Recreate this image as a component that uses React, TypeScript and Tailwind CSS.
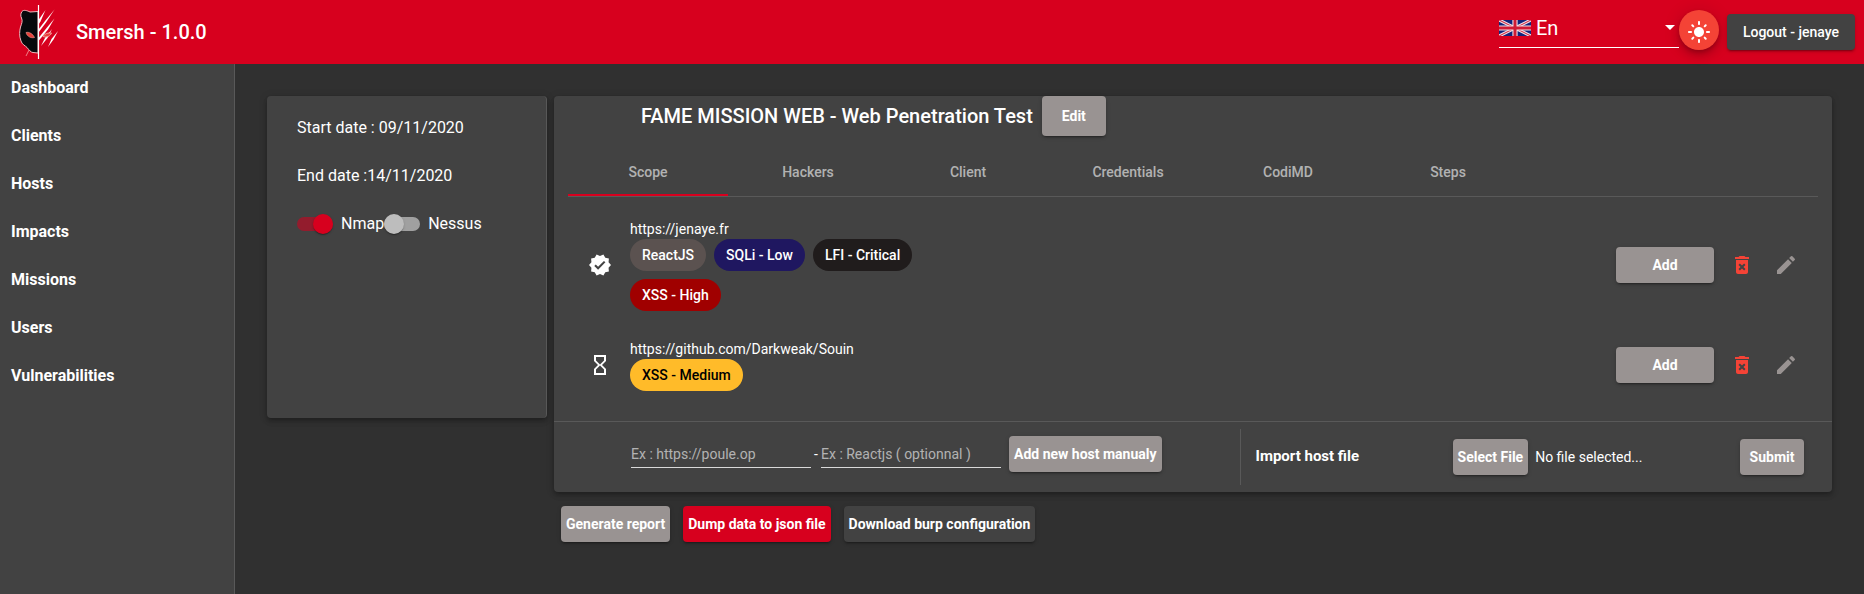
import { useRef, useState, type ReactNode } from 'react';
import { MdDeleteForever, MdEdit, MdHourglassEmpty, MdLightMode, MdVerified } from 'react-icons/md';

const NAV = ['Dashboard', 'Clients', 'Hosts', 'Impacts', 'Missions', 'Users', 'Vulnerabilities'];
const TABS = ['Scope', 'Hackers', 'Client', 'Credentials', 'CodiMD', 'Steps'];

type Chip = { label: string; tone: string };
type Host = { url: string; verified: boolean; chips: Chip[] };

const HOSTS: Host[] = [
  {
    url: 'https://jenaye.fr',
    verified: true,
    chips: [
      { label: 'ReactJS', tone: 'bg-[#5b5250] text-white' },
      { label: 'SQLi - Low', tone: 'bg-[#1f1760] text-white' },
      { label: 'LFI - Critical', tone: 'bg-[#201c1c] text-white' },
      { label: 'XSS - High', tone: 'bg-[#a00000] text-white' },
    ],
  },
  {
    url: 'https://github.com/Darkweak/Souin',
    verified: false,
    chips: [{ label: 'XSS - Medium', tone: 'bg-[#ffbb29] text-black' }],
  },
];

const RAISED =
  'shadow-[0_3px_1px_-2px_rgba(0,0,0,0.2),0_2px_2px_0_rgba(0,0,0,0.14),0_1px_5px_0_rgba(0,0,0,0.12)]';
const CARD =
  'rounded bg-[#424242] shadow-[0_2px_4px_-1px_rgba(0,0,0,0.2),0_4px_5px_0_rgba(0,0,0,0.14),0_1px_10px_0_rgba(0,0,0,0.12)]';

function Button({ className, children, onClick }: { className: string; children: ReactNode; onClick?: () => void }) {
  return (
    <button type="button" onClick={onClick} className={`shrink-0 rounded text-sm whitespace-nowrap text-white ${RAISED} ${className}`}>
      {children}
    </button>
  );
}

function Logo() {
  return (
    <svg viewBox="0 0 40 54" className="h-[54px] w-10" aria-hidden="true">
      <path
        d="M20 6.500 L12 7 C9 5.500 5.500 4.500 4 6.500 C2.500 8.500 2.500 11 3.500 13 C5 16 3.500 19 2.500 22 C1.500 26 1 31 3 36 C4 39.500 7 40.500 9 42.500 C11 45 13 47.500 15 47.500 L20 48 Z"
        fill="#06090c"
        stroke="#f0b9be"
        strokeWidth="1"
      />
      <path d="M20.500 0 V54" stroke="#fff" strokeWidth="1.200" />
      <path d="M8 27.500 C11 26.500 15 29 16.500 32.500 C13 33.500 9 31.500 8 27.500 Z" fill="#e8403a" stroke="#f0a09a" strokeWidth="0.600" />
      <g fill="#fff">
        <path d="M27.500 5 L22.500 16.500 L20.500 19.500 V15 Z" />
        <path d="M36.500 4.500 L28 17.500 L20.500 27.500 V24.500 L27 16 Z" />
        <path d="M36.500 13.500 L30 24.500 L20.500 36 V33 L29 22.500 Z" />
        <path d="M34 24 L29.500 33 L23 41 L27 33 Z" />
        <path d="M40 26 L35.500 34.500 L30 42 L33.500 34 Z" />
      </g>
      <path d="M25 31.500 C26.500 28.500 30.500 27.500 33.500 28 C32.500 31 28.500 33 25 31.500 Z" fill="#e8403a" stroke="#f6b5ae" strokeWidth="0.800" />
      <path d="M11 45 L8 51" stroke="#ee7d86" strokeWidth="1" fill="none" />
    </svg>
  );
}

function UnionFlag() {
  return (
    <svg viewBox="0 0 32 16" className="h-4 w-8 shrink-0" aria-hidden="true">
      <rect width="32" height="16" fill="#12247c" />
      <path d="M0 0 L32 16 M32 0 L0 16" stroke="#f1dfe4" strokeWidth="3.200" />
      <path d="M0 0 L32 16 M32 0 L0 16" stroke="#cf2740" strokeWidth="1.100" />
      <path d="M16 0 V16 M0 8 H32" stroke="#f1dfe4" strokeWidth="5.200" />
      <path d="M16 0 V16 M0 8 H32" stroke="#cf1b35" strokeWidth="3" />
    </svg>
  );
}

function Header() {
  return (
    <header className="flex h-16 items-center bg-[#d7001e] pr-[9px] pl-[18px]">
      <Logo />
      <h1 className="ml-[18px] text-xl font-medium">Smersh - 1.0.0</h1>
      <div className="relative mb-2 ml-auto flex h-10 w-[180px] items-center border-b border-white">
        <UnionFlag />
        <select aria-label="Language" className="h-full w-full appearance-none bg-transparent pl-[5px] text-xl outline-none">
          <option>En</option>
        </select>
        <svg viewBox="0 0 10 5" className="pointer-events-none absolute top-[17px] right-1 h-[5px] w-[10px]" aria-hidden="true">
          <path d="M0 0 H10 L5 5 Z" fill="#fff" />
        </svg>
      </div>
      <button
        type="button"
        aria-label="Toggle theme"
        className="mb-1 flex size-10 items-center justify-center rounded-full bg-[#f44336] pt-1 shadow-[0_3px_5px_-1px_rgba(0,0,0,0.2),0_6px_10px_0_rgba(0,0,0,0.14),0_1px_18px_0_rgba(0,0,0,0.12)]"
      >
        <MdLightMode className="size-6" />
      </button>
      <Button className="ml-2 h-9 bg-[#424242] px-4 font-medium">Logout - jenaye</Button>
    </header>
  );
}

function Toggle({ label, defaultChecked }: { label: string; defaultChecked?: boolean }) {
  return (
    <label className="flex items-center gap-2">
      <input
        type="checkbox"
        defaultChecked={defaultChecked}
        className="relative h-3.5 w-9 appearance-none rounded-full bg-[#a0a0a0] before:absolute before:-top-[3px] before:left-0 before:size-5 before:rounded-full before:bg-[#bdbdbd] before:shadow-[0_2px_1px_-1px_rgba(0,0,0,0.2),0_1px_1px_0_rgba(0,0,0,0.14),0_1px_3px_0_rgba(0,0,0,0.12)] checked:bg-[#931c2d] checked:before:left-4 checked:before:bg-[#d7001e]"
      />
      {label}
    </label>
  );
}

function HostRow({ host }: { host: Host }) {
  return (
    <li className="flex items-center pr-[34px] pl-[34px]">
      {host.verified ? <MdVerified className="size-6" /> : <MdHourglassEmpty className="size-6" />}
      <div className="ml-[18px]">
        <p className="text-sm">{host.url}</p>
        <ul className="flex w-80 flex-wrap gap-2">
          {host.chips.map((chip) => (
            <li key={chip.label} className={`flex h-8 items-center rounded-full px-3 text-sm font-medium ${chip.tone}`}>
              {chip.label}
            </li>
          ))}
        </ul>
      </div>
      <Button className="ml-auto h-9 w-[98px] bg-[#999392] font-bold">Add</Button>
      <button type="button" aria-label={`Delete ${host.url}`} className="ml-4 text-[#f44336]">
        <MdDeleteForever className="size-6" />
      </button>
      <button type="button" aria-label={`Edit ${host.url}`} className="ml-5 text-[#999392]">
        <MdEdit className="size-6" />
      </button>
    </li>
  );
}

function HostForms() {
  const fileInput = useRef<HTMLInputElement>(null);
  const [fileName, setFileName] = useState('No file selected...');
  const field = 'h-7 w-[180px] border-b border-white/80 bg-transparent text-sm outline-none placeholder:text-white/60';
  return (
    <div className="flex h-[71px] items-center border-t border-white/12 pr-7 pl-[77px] text-sm">
      <form className="mb-1.5 flex items-center">
        <input aria-label="Host URL" placeholder="Ex : https://poule.op" className={field} />
        <span className="w-2.5 text-center">-</span>
        <input aria-label="Technology" placeholder="Ex : Reactjs ( optionnal )" className={field} />
        <Button className="ml-2 h-9 bg-[#999392] px-[5px] font-bold">Add new host manualy</Button>
      </form>
      <form className="ml-[78px] flex h-14 flex-1 items-center border-l border-white/12 pl-[15px]">
        <label htmlFor="host-file" className="w-[197px] text-[15px] font-bold">
          Import host file
        </label>
        <input
          ref={fileInput}
          id="host-file"
          type="file"
          className="hidden"
          onChange={(e) => setFileName(e.target.files?.[0]?.name ?? 'No file selected...')}
        />
        <Button className="h-9 bg-[#999392] px-[5px] font-bold" onClick={() => fileInput.current?.click()}>
          Select File
        </Button>
        <span className="ml-[7px]">{fileName}</span>
        <Button className="ml-auto h-9 w-16 bg-[#999392] font-bold">Submit</Button>
      </form>
    </div>
  );
}

export default function App() {
  return (
    <div className="flex min-h-screen flex-col bg-[#303030] font-[Roboto,sans-serif] text-white">
      <Header />
      <div className="flex flex-1">
        <nav className="w-[235px] shrink-0 border-r border-white/12 bg-[#424242]">
          {NAV.map((item) => (
            <a key={item} href="#" className="flex h-12 items-center px-[11px] text-base font-bold">
              {item}
            </a>
          ))}
        </nav>
        <main className="flex flex-1 items-start gap-[7px] px-8 pt-8">
          <section className={`h-[322px] w-[280px] shrink-0 border-r border-white/12 px-[30px] pt-2 ${CARD}`}>
            <p className="flex h-12 items-center">Start date : 09/11/2020</p>
            <p className="flex h-12 items-center">End date :14/11/2020</p>
            <div className="flex h-12 items-center">
              <Toggle label="Nmap" defaultChecked />
              <Toggle label="Nessus" />
            </div>
          </section>
          <div className="flex-1">
            <section className={CARD}>
              <div className="flex items-center gap-[9px] pl-[87px]">
                <h2 className="text-xl font-medium">FAME MISSION WEB - Web Penetration Test</h2>
                <Button className="h-10 w-16 bg-[#999392] font-bold">Edit</Button>
              </div>
              <div role="tablist" className="mx-3.5 mt-3 flex border-b border-white/12">
                {TABS.map((tab, i) => (
                  <button
                    key={tab}
                    type="button"
                    role="tab"
                    aria-selected={i === 0}
                    className={`h-12 w-40 border-b-2 pt-0.5 text-sm font-medium text-white/60 ${
                      i === 0 ? 'border-[#d7001e]' : 'border-transparent'
                    }`}
                  >
                    {tab}
                  </button>
                ))}
              </div>
              <ul className="flex flex-col gap-7 pt-[22px] pb-[30px]">
                {HOSTS.map((host) => (
                  <HostRow key={host.url} host={host} />
                ))}
              </ul>
              <HostForms />
            </section>
            <div className="mt-3.5 flex gap-[13px] pl-[7px]">
              <Button className="h-9 bg-[#999392] px-[5px] font-bold">Generate report</Button>
              <Button className="h-9 bg-[#d7001e] px-[5px] font-bold">Dump data to json file</Button>
              <Button className="h-9 bg-[#424242] px-[5px] font-bold">Download burp configuration</Button>
            </div>
          </div>
        </main>
      </div>
    </div>
  );
}
